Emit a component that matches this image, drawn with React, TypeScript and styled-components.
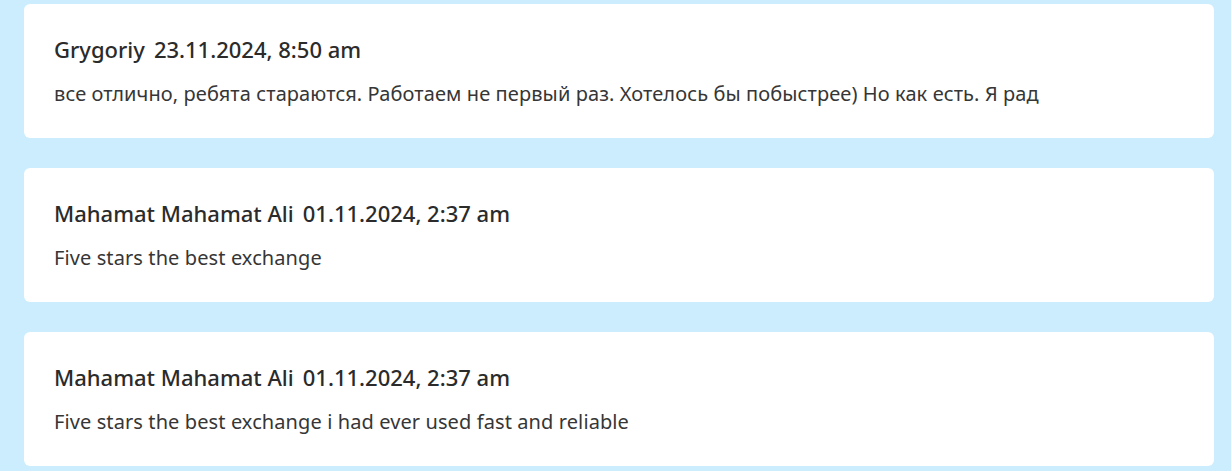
import styled, { createGlobalStyle } from "styled-components";

const GlobalStyle = createGlobalStyle`
  * {
    box-sizing: border-box;
  }
  body {
    margin: 0;
    background: #cbedfd;
    font-family: "Noto Sans", "Open Sans", sans-serif;
  }
`;

const Page = styled.div`
  display: flex;
  flex-direction: column;
  gap: 30px;
  padding: 4px 17px 4px 24px;
`;

const Card = styled.div`
  background: #ffffff;
  border-radius: 6px;
  padding: 30px 30px 0;
  height: 134px;
  display: flex;
  flex-direction: column;
  gap: 16px;
`;

const Header = styled.div`
  font-size: 22px;
  line-height: 30px;
  font-weight: 500;
  color: #2b2b2b;
  display: flex;
  gap: 9px;
`;

const Text = styled.div`
  font-size: 20px;
  line-height: 28px;
  letter-spacing: 0.1px;
  color: #363636;
`;

const reviews = [
  {
    author: "Grygoriy",
    date: "23.11.2024, 8:50 am",
    text: "все отлично, ребята стараются. Работаем не первый раз. Хотелось бы побыстрее) Но как есть. Я рад",
  },
  {
    author: "Mahamat Mahamat Ali",
    date: "01.11.2024, 2:37 am",
    text: "Five stars the best exchange",
  },
  {
    author: "Mahamat Mahamat Ali",
    date: "01.11.2024, 2:37 am",
    text: "Five stars the best exchange i had ever used fast and reliable",
  },
];

function App() {
  return (
    <>
      <GlobalStyle />
      <Page>
        {reviews.map((r, i) => (
          <Card key={i}>
            <Header>
              <span>{r.author}</span>
              <span>{r.date}</span>
            </Header>
            <Text>{r.text}</Text>
          </Card>
        ))}
      </Page>
    </>
  );
}

export default App;
